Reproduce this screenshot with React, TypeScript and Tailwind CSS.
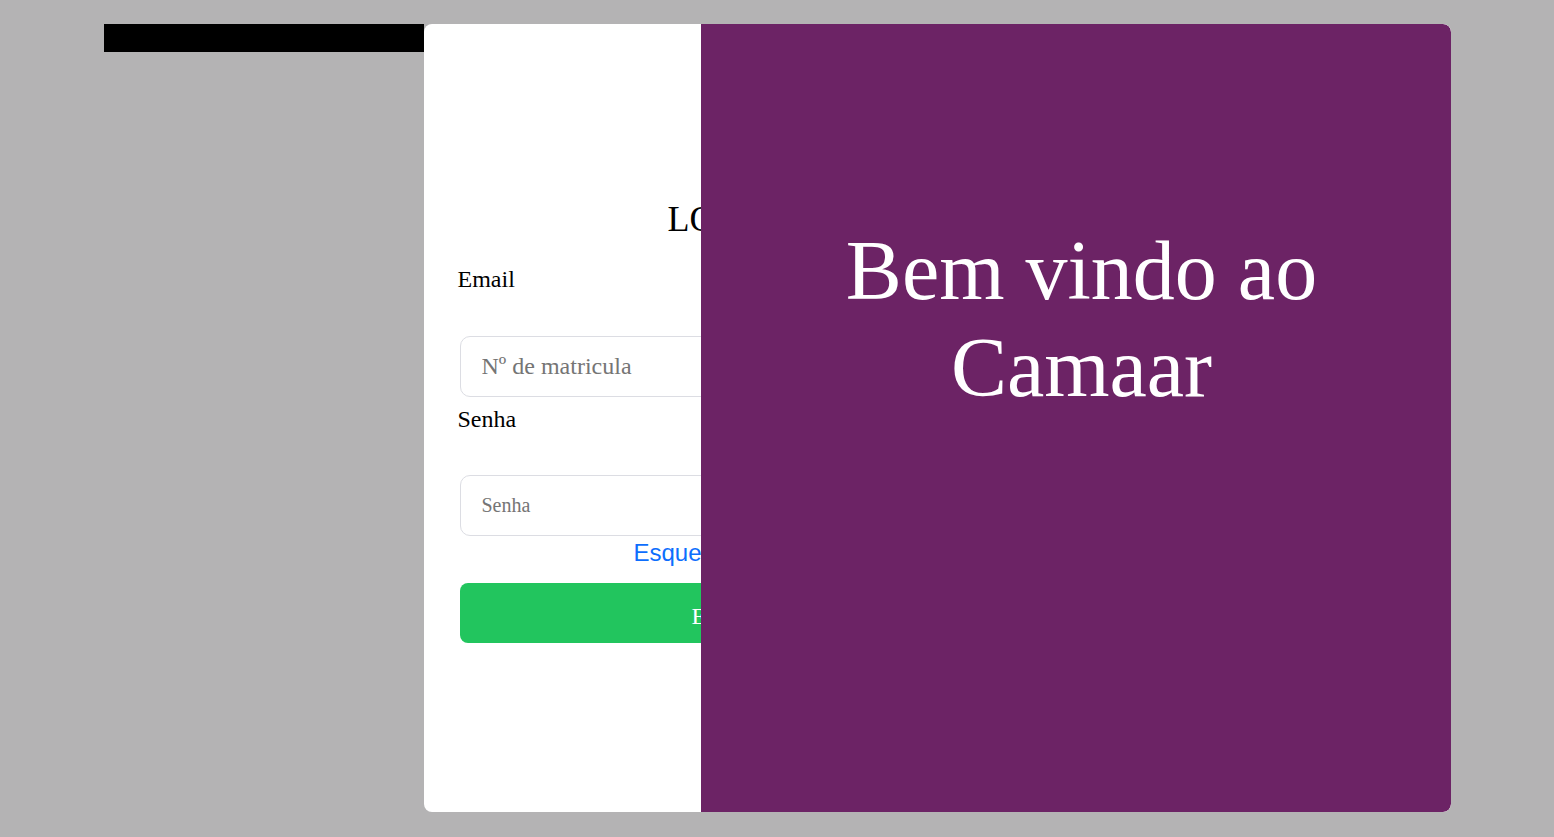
import React from "react";

export default function App() {
  return (
    <div className="min-h-screen w-full bg-[#b4b3b4] flex justify-center items-start pt-6 pb-[25px]" style={{ fontFamily: '"Liberation Serif", "Times New Roman", serif' }}>
      <div className="w-[320px] h-[28px] bg-black shrink-0" />
      <div className="relative w-[1027px] h-[788px] bg-white rounded-lg overflow-hidden shrink-0 flex">
        <div className="w-[600px] px-[34px] pt-[6px] flex flex-col justify-center">
          <div className="flex flex-col">
            <h1 className="text-[36px] leading-[40px] text-center text-black">LOGIN</h1>
            <label className="mt-[26px] text-[24px] leading-[28px] text-black">Email</label>
            <input
              type="text"
              placeholder="Nº de matricula"
              className="mt-[43px] ml-[2px] h-[61px] rounded-[10px] border border-[#dcdde3] pl-[21px] text-[24px] placeholder:text-[#757575] outline-none"
              style={{ fontFamily: '"Liberation Serif", "Times New Roman", serif' }}
            />
            <label className="mt-[8px] text-[24px] leading-[28px] text-black">Senha</label>
            <input
              type="password"
              placeholder="Senha"
              className="mt-[42px] ml-[2px] h-[61px] rounded-[10px] border border-[#dcdde3] pl-[21px] text-[20px] placeholder:text-[#757575] outline-none"
              style={{ fontFamily: '"Liberation Serif", "Times New Roman", serif' }}
            />
            <a
              href="#"
              className="mt-[3px] ml-[176px] text-[24px] leading-[28px] text-[#0d6efd]"
              style={{ fontFamily: '"Liberation Sans", Arial, sans-serif' }}
            >
              Esqueceu a senha?
            </a>
            <button className="mt-[16px] ml-[2px] h-[60px] rounded-lg bg-[#22c55e] text-white text-[24px] pt-[6px] pr-[6px]">
              Entrar
            </button>
          </div>
        </div>
        <div className="absolute top-0 right-0 w-[750px] h-full bg-[#6c2365] rounded-r-lg pt-[198px] pl-[60px] pr-[48px]">
          <p className="text-white text-[84px] leading-[97px] text-center">Bem vindo ao Camaar</p>
        </div>
      </div>
    </div>
  );
}
